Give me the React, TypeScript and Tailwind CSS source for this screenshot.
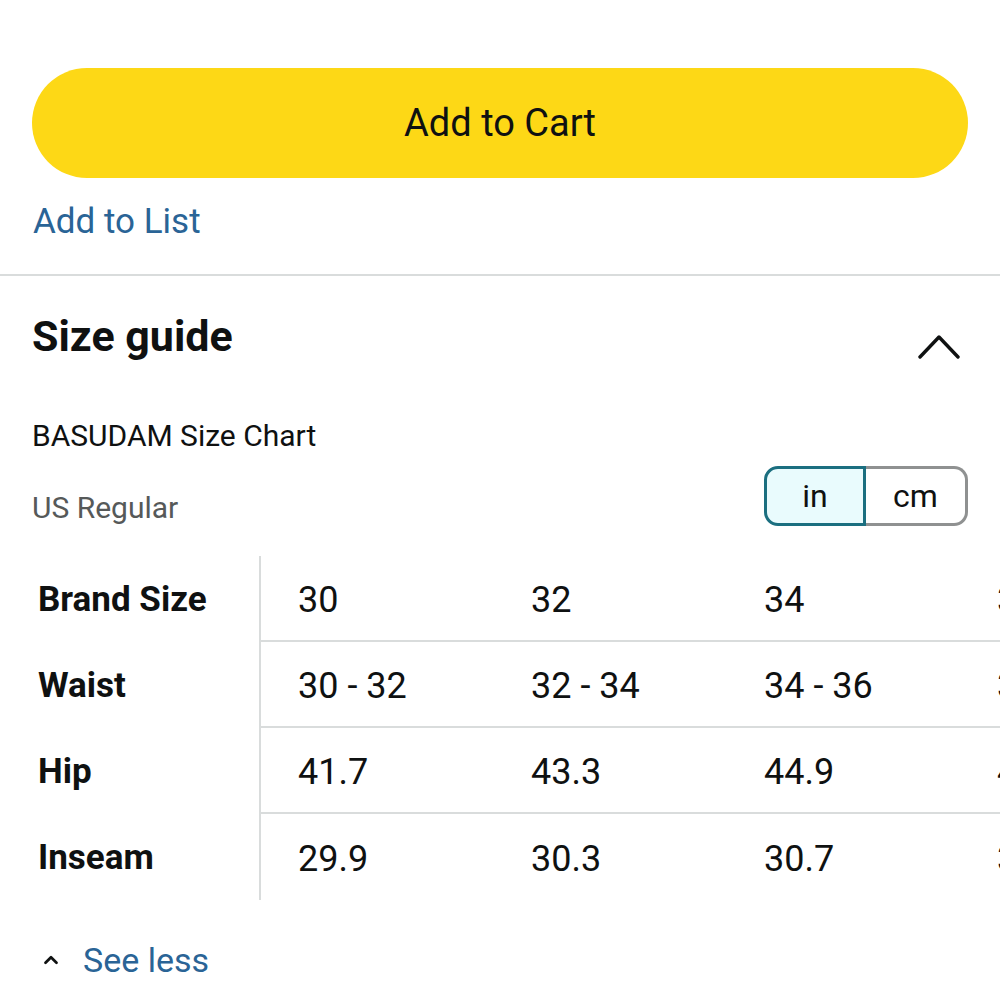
import { ChevronUp } from "lucide-react";

const rows = [
  { label: "Brand Size", values: ["30", "32", "34", "36"] },
  { label: "Waist", values: ["30 - 32", "32 - 34", "34 - 36", "36 - 38"] },
  { label: "Hip", values: ["41.7", "43.3", "44.9", "46.5"] },
  { label: "Inseam", values: ["29.9", "30.3", "30.7", "31.1"] },
];

export default function App() {
  return (
    <div
      className="w-[1000px] h-[1000px] overflow-hidden bg-white text-[#0f1111]"
      style={{ fontFamily: "Roboto, 'Liberation Sans', Arial, sans-serif" }}
    >
      <div className="px-8 pt-[68px]">
        <button
          type="button"
          className="w-full h-[110px] rounded-full bg-[#fdd816] text-[38px] text-[#0f1111] flex items-center justify-center"
        >
          Add to Cart
        </button>
        <div className="mt-[20px] h-[48px] flex items-center text-[35px] text-[#2a6496] px-px">
          Add to List
        </div>
      </div>

      <div className="mt-[28px] h-[2px] bg-[#d9dcdc]" />

      <div className="px-8">
        <div className="flex items-start justify-between pt-[38px]">
          <h2 className="text-[43px] font-bold leading-[44px]">Size guide</h2>
          {/* collapse chevron */}
          <svg
            viewBox="0 0 42 26"
            className="w-[42px] h-[26px] mt-[20px] mr-[8px]"
            fill="none"
            stroke="#0f1111"
            strokeWidth={3.4}
            strokeLinecap="round"
            strokeLinejoin="round"
          >
            <polyline points="2,23 21,3 40,23" />
          </svg>
        </div>

        <div className="mt-[58px] text-[30px] leading-[36px]">BASUDAM Size Chart</div>

        <div className="mt-[12px] flex items-start justify-between">
          <div className="text-[30px] leading-[36px] text-[#565959] mt-[24px]">US Regular</div>
          <div className="flex h-[60px] text-[32px]">
            <div className="w-[102px] rounded-l-[14px] border-[3px] border-[#1b6f80] bg-[#e9fbfd] flex items-center justify-center">
              in
            </div>
            <div className="w-[102px] rounded-r-[14px] border-[3px] border-l-0 border-[#8f9191] flex items-center justify-center">
              cm
            </div>
          </div>
        </div>
      </div>

      <div className="mt-[30px] flex">
        <div className="w-[261px] shrink-0 border-r-2 border-[#d9dcdc]">
          {rows.map((r) => (
            <div
              key={r.label}
              className="h-[86px] flex items-center pl-[38px] pt-[3px] text-[35px] font-bold"
            >
              {r.label}
            </div>
          ))}
        </div>
        <div className="flex-1 overflow-hidden">
          {rows.map((r, i) => (
            <div
              key={r.label}
              className={`h-[86px] flex items-center pt-[3px] ${i < rows.length - 1 ? "border-b-2 border-[#d9dcdc]" : ""}`}
            >
              {r.values.map((v) => (
                <div key={v} className="w-[233px] shrink-0 pl-[37px] text-[36px] whitespace-nowrap">
                  {v}
                </div>
              ))}
            </div>
          ))}
        </div>
      </div>

      <div className="mt-[40px] flex items-center pl-[40px] h-[40px]">
        <ChevronUp className="size-[22px] text-[#0f1111]" strokeWidth={3} />
        <span className="ml-[21px] text-[34px] text-[#2a6496]">See less</span>
      </div>
    </div>
  );
}
